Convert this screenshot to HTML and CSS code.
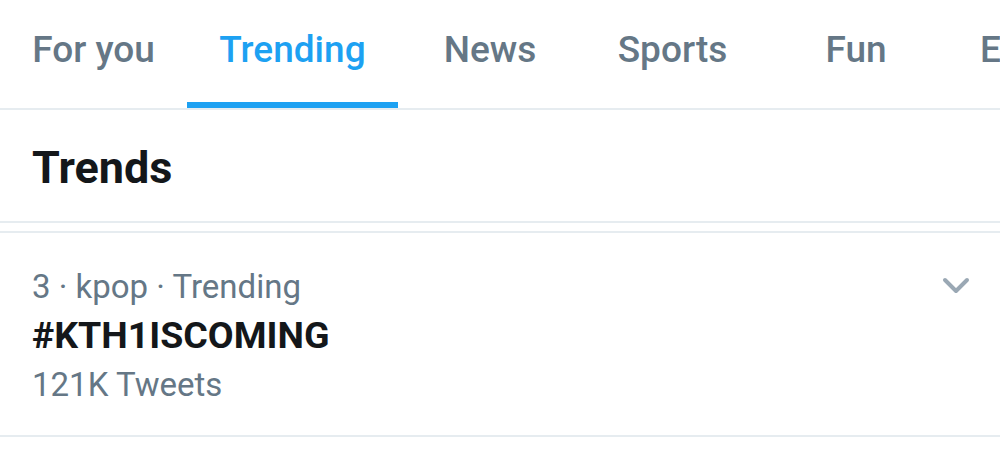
FILE: index.html
```html
<!DOCTYPE html>
<html>
<head>
<meta charset="utf-8">
<link rel="stylesheet" href="styles.css">
</head>
<body>
<div class="page">
  <nav class="tabs">
    <div class="tab">For you</div>
    <div class="tab active">Trending</div>
    <div class="tab">News</div>
    <div class="tab">Sports</div>
    <div class="tab">Fun</div>
    <div class="tab">Entertainment</div>
  </nav>
  <header class="section-head">
    <h1 class="section-title">Trends</h1>
  </header>
  <div class="spacer"></div>
  <div class="trend">
    <div class="trend-body">
      <div class="trend-meta">3 · kpop · Trending</div>
      <div class="trend-name">#KTH1ISCOMING</div>
      <div class="trend-count">121K Tweets</div>
    </div>
    <svg class="chevron" width="28" height="18" viewBox="0 0 28 18">
      <path d="M3 3 L14 14 L25 3" fill="none" stroke="#9aa8b4" stroke-width="4" stroke-linecap="round" stroke-linejoin="round"/>
    </svg>
  </div>
</div>
</body>
</html>
```

FILE: styles.css
```css
html, body {
  margin: 0;
  padding: 0;
  background: #ffffff;
}
body {
  font-family: Roboto, "Liberation Sans", sans-serif;
  width: 1000px;
  height: 469px;
  overflow: hidden;
}
.page {
  width: 1000px;
}
.tabs {
  display: flex;
  height: 108px;
  border-bottom: 2px solid #e6ecf0;
  overflow: hidden;
  white-space: nowrap;
}
.tab {
  flex: 0 0 auto;
  min-width: 120px;
  padding: 0 31px;
  box-sizing: border-box;
  text-align: center;
  font-size: 37px;
  font-weight: 500;
  color: #657786;
  line-height: 100px;
  height: 108px;
}
.tab:nth-child(1) { width: 187px; }
.tab:nth-child(2) { width: 211px; }
.tab:nth-child(3) { width: 184px; }
.tab:nth-child(4) { width: 181px; }
.tab:nth-child(5) { width: 186px; }
.tab:nth-child(6) { text-align: left; }
.tab.active {
  color: #1da1f2;
  box-shadow: inset 0 -7px 0 #1da1f2;
  height: 109px;
}
.section-head {
  height: 113px;
  border-bottom: 2px solid #e6ecf0;
  box-sizing: border-box;
  padding: 31px 0 0 32px;
}
.section-title {
  margin: 0;
  font-size: 45px;
  line-height: 53px;
  font-weight: 700;
  color: #14171a;
}
.spacer {
  height: 8px;
  background: #ffffff;
  border-bottom: 2px solid #e6ecf0;
}
.trend {
  display: flex;
  justify-content: space-between;
  align-items: flex-start;
  padding: 29px 30px 0 32px;
  height: 204px;
  border-bottom: 2px solid #e6ecf0;
  box-sizing: border-box;
}
.trend-meta {
  font-size: 33px;
  color: #657786;
  line-height: 49px;
}
.trend-name {
  font-size: 37.5px;
  font-weight: 700;
  color: #14171a;
  line-height: 49px;
}
.trend-count {
  font-size: 33px;
  color: #657786;
  line-height: 49px;
}
.chevron {
  margin-top: 15px;
}
```
